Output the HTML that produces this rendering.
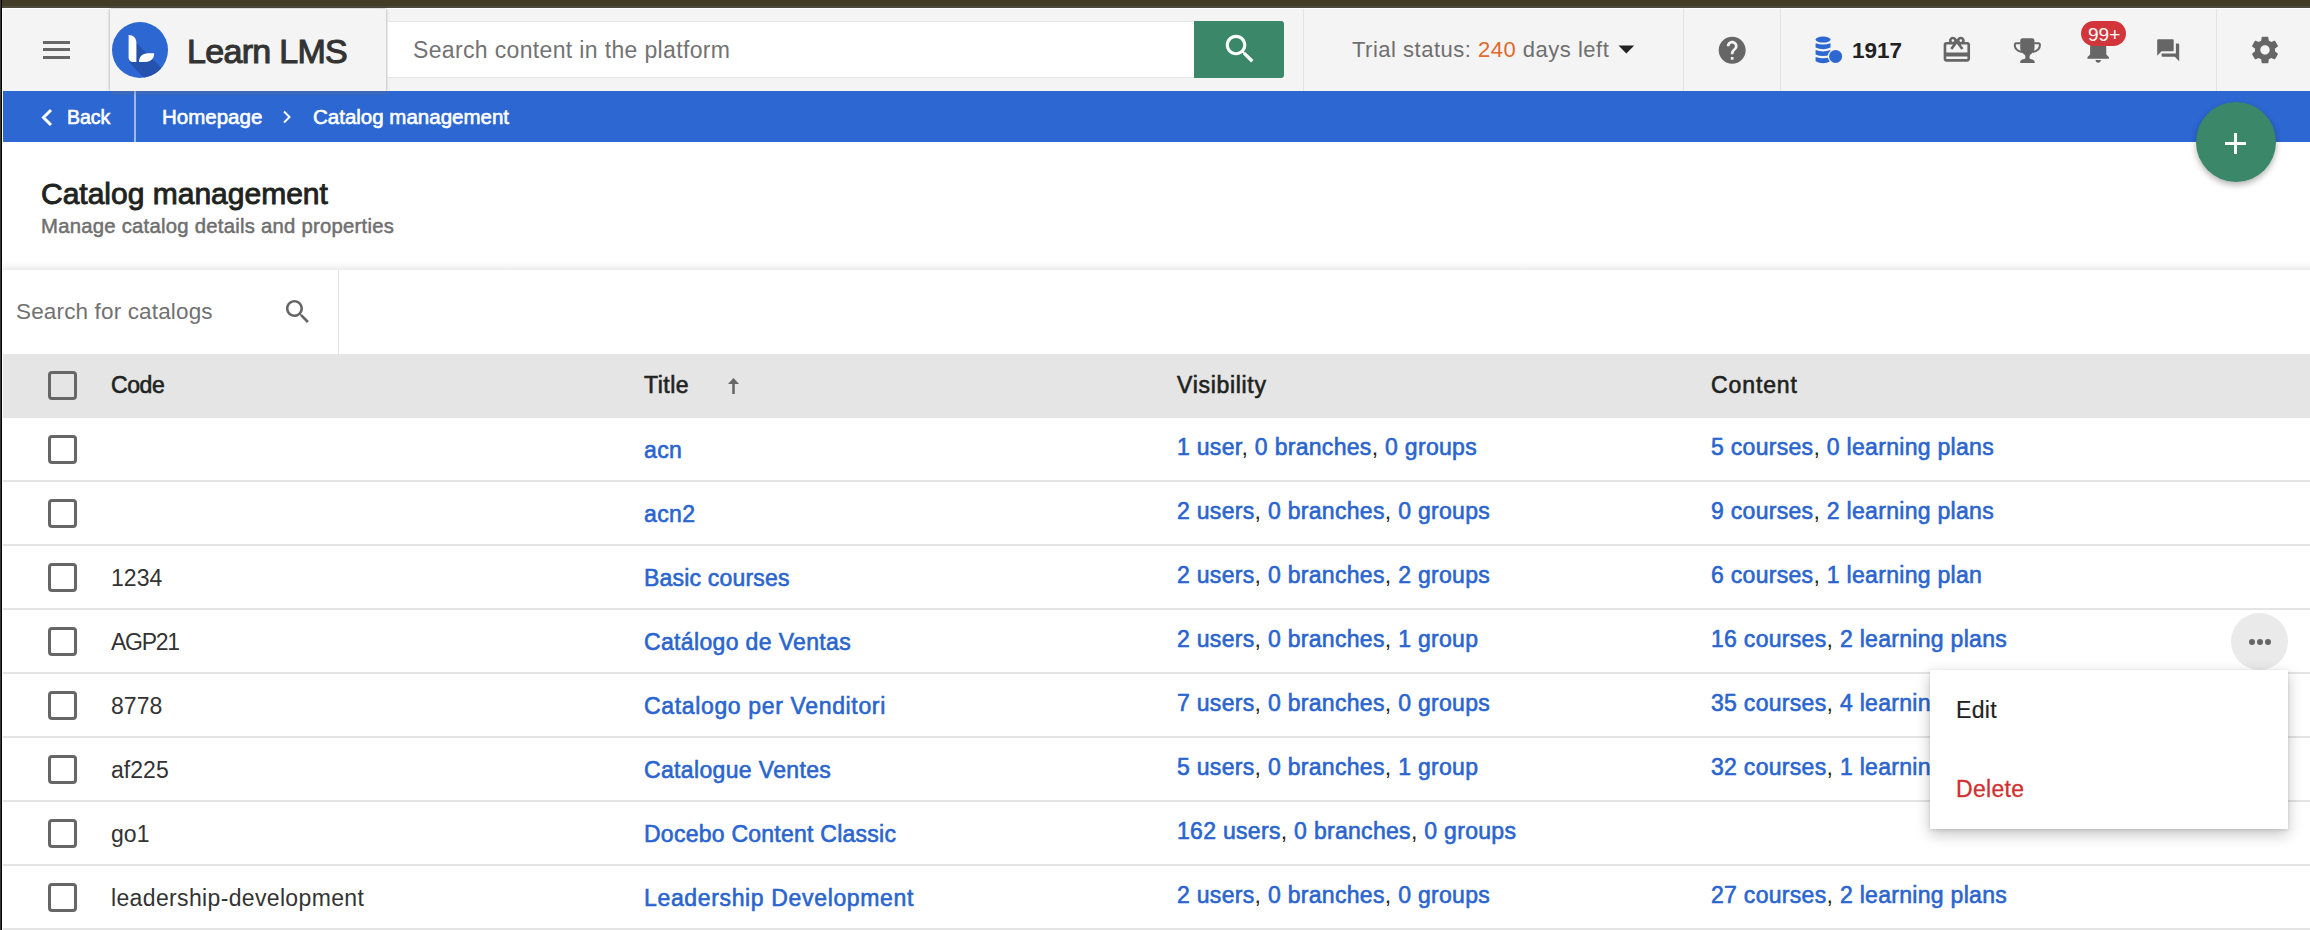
<!DOCTYPE html>
<html><head><meta charset="utf-8">
<style>
*{box-sizing:border-box;margin:0;padding:0}
html,body{width:2310px;height:930px;overflow:hidden;background:#fff;font-family:"Liberation Sans",sans-serif;position:relative}
.a{position:absolute}
.t{position:absolute;white-space:nowrap;line-height:1}
.sb{-webkit-text-stroke:0.6px currentColor}
svg{position:absolute;display:block}
.vd{position:absolute;top:9px;width:1px;height:82px;background:#e2e2e2}
.cb{position:absolute;left:48px;width:29px;height:29px;border:3px solid #666;border-radius:4px;background:#fff}
.rl{position:absolute;left:3px;width:2307px;height:2px;background:#e4e4e4}
.lk{color:#2a65cf}
.cm{color:#222}
</style></head><body>
<!-- top dark bar -->
<div class="a" style="left:0;top:0;width:2310px;height:8px;background:#433c27"></div>
<div class="a" style="left:0;top:6px;width:2310px;height:2px;background:#4e4a3c"></div>
<div class="a" style="left:0;top:8px;width:2310px;height:1px;background:#fff"></div>
<!-- header -->
<div class="a" style="left:3px;top:9px;width:2307px;height:82px;background:#f4f4f4"></div>

<!-- hamburger -->
<div class="a" style="left:43px;top:41px;width:27px;height:3px;background:#666"></div>
<div class="a" style="left:43px;top:48px;width:27px;height:3px;background:#666"></div>
<div class="a" style="left:43px;top:56px;width:27px;height:3px;background:#666"></div>

<!-- logo panel -->
<div class="a" style="left:110px;top:9px;width:276px;height:82px;background:#f4f4f4;box-shadow:0 0 3px rgba(0,0,0,0.35)"></div>
<svg style="left:112px;top:22px" width="56" height="56" viewBox="0 0 56 56">
  <defs><clipPath id="cc"><circle cx="28" cy="28" r="28"/></clipPath></defs>
  <circle cx="28" cy="28" r="28" fill="#2d67d2"/>
  <g clip-path="url(#cc)">
    <polygon points="24.4,21 62,58.6 62,62 38,62 17,40" fill="#2452ad"/>
  </g>
  <path d="M16.6,13 C21.5,13 24.4,16.5 24.4,21 L24.4,40 L21,40 C18.5,40 16.6,38 16.6,35.5 Z" fill="#fff"/>
  <path d="M27,40 C27,35 30,31.3 36,31.3 L42.2,31.3 C42.2,36.5 39,40 33,40 Z" fill="#fff"/>
</svg>
<div class="t" style="left:187px;top:34px;font-size:34px;color:#333;letter-spacing:-0.7px;-webkit-text-stroke:1.1px #333">Learn LMS</div>

<!-- search -->
<div class="a" style="left:387px;top:21px;width:807px;height:57px;background:#fff;border:1px solid #e6e6e6;border-right:none"></div>
<div class="t" style="left:413px;top:39px;font-size:23px;letter-spacing:0.35px;color:#737373">Search content in the platform</div>
<div class="a" style="left:1194px;top:21px;width:90px;height:57px;background:#3b8769;border-radius:0 3px 3px 0"></div>
<svg style="left:1221px;top:30px" width="38" height="38" viewBox="0 0 24 24"><path fill="#fff" d="M15.5 14h-.79l-.28-.27C15.41 12.59 16 11.11 16 9.5 16 5.91 13.09 3 9.5 3S3 5.91 3 9.5 5.91 16 9.5 16c1.61 0 3.09-.59 4.23-1.57l.27.28v.79l5 4.99L20.49 19l-4.99-5zm-6 0C7.01 14 5 11.99 5 9.5S7.01 5 9.5 5 14 7.01 14 9.5 11.99 14 9.5 14z"/></svg>

<div class="vd" style="left:1303px"></div>
<div class="t" style="left:1352px;top:39px;font-size:22px;letter-spacing:0.5px;color:#6f6f6f">Trial status: <span style="color:#e0692b">240</span> days left</div>
<svg style="left:1618px;top:45px" width="17" height="9" viewBox="0 0 17 9"><polygon points="0.5,0.5 16.2,0.5 8.35,8.6" fill="#222"/></svg>
<div class="vd" style="left:1683px"></div>
<svg style="left:1716px;top:34px" width="32.4" height="32.4" viewBox="0 0 24 24"><path fill="#666" d="M12 2C6.48 2 2 6.48 2 12s4.48 10 10 10 10-4.48 10-10S17.52 2 12 2zm1 17h-2v-2h2v2zm2.07-7.75l-.9.92C13.45 12.9 13 13.5 13 15h-2v-.5c0-1.1.45-2.1 1.17-2.83l1.24-1.26c.37-.36.59-.86.59-1.41 0-1.1-.9-2-2-2s-2 .9-2 2H8c0-2.21 1.79-4 4-4s4 1.79 4 4c0 .88-.36 1.68-.93 2.25z"/></svg>
<div class="vd" style="left:1780px"></div>

<!-- coins -->
<svg style="left:1810px;top:32px" width="40" height="36" viewBox="0 0 40 36">
  <g fill="#2d67d2">
    <ellipse cx="13.05" cy="7.55" rx="7.45" ry="2.95"/>
    <path d="M5.6,11.2 Q13.05,13.8 20.5,11.2 V15.5 Q13.05,18.9 5.6,15.5 Z"/>
    <path d="M5.6,18.1 Q13.05,20.7 20.5,18.1 V22.4 Q13.05,25.8 5.6,22.4 Z"/>
    <path d="M5.6,25.0 Q13.05,27.6 20.5,25.0 V29.3 Q13.05,33.3 5.6,29.3 Z"/>
  </g>
  <circle cx="25.6" cy="24.4" r="7.8" fill="#f4f4f4"/>
  <circle cx="25.6" cy="24.4" r="6.5" fill="#2d67d2"/>
</svg>
<div class="t" style="left:1852px;top:39.5px;font-size:22.5px;font-weight:bold;color:#222">1917</div>

<!-- gift -->
<svg style="left:1941px;top:34px" width="31.7" height="31.7" viewBox="0 0 24 24"><path fill="#666" d="M20 6h-2.18c.11-.31.18-.65.18-1 0-1.66-1.34-3-3-3-1.05 0-1.96.54-2.5 1.35l-.5.67-.5-.68C10.96 2.54 10.05 2 9 2 7.34 2 6 3.340 6 5c0 .35.07.69.18 1H4c-1.11 0-1.99.89-1.99 2L2 19c0 1.11.89 2 2 2h16c1.11 0 2-.89 2-2V8c0-1.11-.89-2-2-2zm-5-2c.55 0 1 .45 1 1s-.45 1-1 1-1-.45-1-1 .45-1 1-1zM9 4c.55 0 1 .45 1 1s-.45 1-1 1-1-.45-1-1 .45-1 1-1zm11 15H4v-2h16v2zm0-5H4V8h5.08L7 10.83 8.62 12 11 8.76l1-1.36 1 1.36L15.38 12 17 10.83 14.92 8H20v6z"/></svg>
<!-- trophy -->
<svg style="left:2008px;top:32px" width="40" height="36" viewBox="0 0 40 36">
  <path fill="#666" d="M12.2,8.7 Q12.2,6.2 14.7,6.2 H24 Q26.5,6.2 26.5,8.7 V15.5 C26.5,19.5 24.5,21 22.5,22.5 C21.3,23.5 21.1,25.8 22.2,27.1 C25,27.3 26.7,28.3 26.7,30 V31 H12.2 V30 C12.2,28.3 13.9,27.3 16.7,27.1 C17.8,25.8 17.6,23.5 16.4,22.5 C14.4,21 12.2,19.5 12.2,15.5 Z"/>
  <path fill="none" stroke="#666" stroke-width="2" d="M12.5,11.3 H8.3 Q6.8,11.3 6.8,13.3 C6.8,17 9.5,19.2 14.2,19.9 M26.2,11.3 H30.4 Q31.9,11.3 31.9,13.3 C31.9,17 29.2,19.2 24.5,19.9"/>
</svg>
<!-- bell -->
<svg style="left:2082px;top:33px" width="32.4" height="32.4" viewBox="0 0 24 24"><path fill="#666" d="M12 22c1.1 0 2-.9 2-2h-4c0 1.1.9 2 2 2zm6-6v-5c0-3.07-1.63-5.64-4.5-6.32V2.5h-3v2.18C7.64 5.36 6 7.92 6 11v5l-2 2v1h16v-1l-2-2z"/></svg>
<div class="a" style="left:2081px;top:21px;width:45px;height:25px;border-radius:12.5px;background:#d2363a"></div>
<div class="t" style="left:2088px;top:25px;font-size:19px;color:#fff">99+</div>
<!-- chat -->
<svg style="left:2155px;top:37px" width="26.4" height="26.4" viewBox="0 0 24 24"><path fill="#666" d="M21 6h-2v9H6v2c0 .55.45 1 1 1h11l4 4V7c0-.55-.45-1-1-1zm-4 6V3c0-.55-.45-1-1-1H3c-.55 0-1 .45-1 1v14l4-4h10c.55 0 1-.45 1-1z"/></svg>
<div class="vd" style="left:2216px"></div>
<!-- gear -->
<svg style="left:2249px;top:34px" width="32" height="32" viewBox="0 0 24 24"><path fill="#666" d="M19.43 12.98c.04-.32.07-.64.07-.98s-.03-.66-.07-.98l2.110-1.65c.19-.15.24-.42.12-.64l-2-3.46c-.12-.22-.39-.3-.61-.22l-2.49 1c-.52-.4-1.08-.73-1.69-.98l-.38-2.65C14.46 2.18 14.25 2 14 2h-4c-.25 0-.46.18-.49.42l-.38 2.65c-.61.25-1.17.59-1.69.98l-2.49-1c-.23-.09-.49 0-.61.22l-2 3.46c-.13.22-.07.49.12.64l2.11 1.65c-.04.32-.07.65-.07.98s.03.66.07.98l-2.11 1.65c-.19.15-.24.42-.12.64l2 3.46c.12.22.39.3.61.22l2.49-1c.52.4 1.08.73 1.69.98l.38 2.65c.03.24.24.42.49.42h4c.25 0 .46-.18.49-.42l.38-2.65c.61-.25 1.17-.59 1.69-.98l2.49 1c.23.09.49 0 .61-.22l2-3.46c.12-.22.07-.49-.12-.64l-2.11-1.65zM12 15.5c-1.93 0-3.5-1.57-3.5-3.5s1.57-3.5 3.5-3.5 3.5 1.57 3.5 3.5-1.57 3.5-3.5 3.5z"/></svg>

<!-- blue bar -->
<div class="a" style="left:3px;top:91px;width:2307px;height:51px;background:#2d67d2"></div>
<svg style="left:40px;top:108px" width="14" height="19" viewBox="0 0 14 19"><polyline points="11,2 3.5,9.5 11,17" fill="none" stroke="#fff" stroke-width="3"/></svg>
<div class="t sb" style="left:67px;top:107.5px;font-size:19.5px;color:#fff">Back</div>
<div class="a" style="left:134px;top:91px;width:2px;height:51px;background:#9fb9ea"></div>
<div class="a" style="left:112px;top:91px;width:276px;height:5px;background:linear-gradient(to bottom,rgba(110,110,110,0.35),rgba(110,110,110,0))"></div>
<div class="t sb" style="left:162px;top:107px;font-size:20.5px;color:#fff">Homepage</div>
<svg style="left:281px;top:110px" width="12" height="14" viewBox="0 0 12 14"><polyline points="3,1.5 8.5,7 3,12.5" fill="none" stroke="#fff" stroke-width="2"/></svg>
<div class="t sb" style="left:313px;top:107px;font-size:20.5px;color:#fff">Catalog management</div>

<!-- title -->
<div class="t" style="left:41px;top:179px;font-size:30px;color:#1e2320;-webkit-text-stroke:0.9px #1e2320">Catalog management</div>
<div class="t" style="left:41px;top:216px;font-size:20.3px;letter-spacing:0.25px;color:#6f6f6f;-webkit-text-stroke:0.5px #6f6f6f">Manage catalog details and properties</div>

<!-- fab -->
<div class="a" style="left:2196px;top:102px;width:80px;height:80px;border-radius:50%;background:#3b8769;box-shadow:0 3px 6px rgba(0,0,0,0.3)"></div>
<div class="a" style="left:2225px;top:142px;width:21px;height:3px;background:#fff"></div>
<div class="a" style="left:2234px;top:133px;width:3px;height:21px;background:#fff"></div>

<!-- separator -->
<div class="a" style="left:3px;top:261px;width:2307px;height:9px;background:linear-gradient(to bottom,rgba(0,0,0,0),rgba(0,0,0,0.035) 60%,rgba(0,0,0,0.075))"></div>

<!-- filter -->
<div class="t" style="left:16px;top:301px;font-size:22.5px;letter-spacing:0.15px;color:#717171">Search for catalogs</div>
<svg style="left:282px;top:296px" width="31.5" height="31.5" viewBox="0 0 24 24"><path fill="#666" d="M15.5 14h-.79l-.28-.27C15.41 12.59 16 11.11 16 9.5 16 5.91 13.09 3 9.5 3S3 5.91 3 9.5 5.91 16 9.5 16c1.61 0 3.09-.59 4.23-1.57l.27.28v.79l5 4.99L20.49 19l-4.99-5zm-6 0C7.01 14 5 11.990 5 9.5S7.01 5 9.5 5 14 7.01 14 9.5 11.99 14 9.5 14z"/></svg>
<div class="a" style="left:338px;top:270px;width:1px;height:84px;background:#e4e4e4"></div>

<!-- table header -->
<div class="a" style="left:3px;top:354px;width:2307px;height:64px;background:#e5e5e5"></div>
<div class="cb" style="top:371px;background:#e5e5e5"></div>
<div class="t sb" style="left:111px;top:374px;font-size:23px;letter-spacing:-0.4px;color:#1e2320">Code</div>
<div class="t sb" style="left:644px;top:374px;font-size:23px;letter-spacing:0.5px;color:#1e2320">Title</div>
<svg style="left:727px;top:377px" width="13" height="18" viewBox="0 0 13 18"><polygon points="6.5,1 12,7 1,7" fill="#666"/><rect x="5.25" y="6" width="2.5" height="11" fill="#666"/></svg>
<div class="t sb" style="left:1177px;top:374px;font-size:23px;letter-spacing:0.7px;color:#1e2320">Visibility</div>
<div class="t sb" style="left:1711px;top:374px;font-size:23px;letter-spacing:0.9px;color:#1e2320">Content</div>

<!-- ROWS -->
<div class="cb" style="top:435px"></div>
<div class="t lk sb" style="left:644px;top:439px;font-size:23px;letter-spacing:0.35px">acn</div>
<div class="t" style="left:1177px;top:435.5px;font-size:23px;letter-spacing:0.3px"><span class="lk sb">1 user</span><span class="cm">, </span><span class="lk sb">0 branches</span><span class="cm">, </span><span class="lk sb">0 groups</span></div>
<div class="t" style="left:1711px;top:435.5px;font-size:23px;letter-spacing:0.3px"><span class="lk sb">5 courses</span><span class="cm">, </span><span class="lk sb">0 learning plans</span></div>
<div class="rl" style="top:480px"></div>
<div class="cb" style="top:499px"></div>
<div class="t lk sb" style="left:644px;top:503px;font-size:23px;letter-spacing:0.35px">acn2</div>
<div class="t" style="left:1177px;top:499.5px;font-size:23px;letter-spacing:0.3px"><span class="lk sb">2 users</span><span class="cm">, </span><span class="lk sb">0 branches</span><span class="cm">, </span><span class="lk sb">0 groups</span></div>
<div class="t" style="left:1711px;top:499.5px;font-size:23px;letter-spacing:0.3px"><span class="lk sb">9 courses</span><span class="cm">, </span><span class="lk sb">2 learning plans</span></div>
<div class="rl" style="top:544px"></div>
<div class="cb" style="top:563px"></div>
<div class="t cm" style="left:111px;top:567px;font-size:23px;letter-spacing:0.05px;color:#333">1234</div>
<div class="t lk sb" style="left:644px;top:567px;font-size:23px;letter-spacing:0.2px">Basic courses</div>
<div class="t" style="left:1177px;top:563.5px;font-size:23px;letter-spacing:0.3px"><span class="lk sb">2 users</span><span class="cm">, </span><span class="lk sb">0 branches</span><span class="cm">, </span><span class="lk sb">2 groups</span></div>
<div class="t" style="left:1711px;top:563.5px;font-size:23px;letter-spacing:0.3px"><span class="lk sb">6 courses</span><span class="cm">, </span><span class="lk sb">1 learning plan</span></div>
<div class="rl" style="top:608px"></div>
<div class="cb" style="top:627px"></div>
<div class="t cm" style="left:111px;top:631px;font-size:23px;letter-spacing:-1.3px;color:#333">AGP21</div>
<div class="t lk sb" style="left:644px;top:631px;font-size:23px;letter-spacing:0.35px">Cat&aacute;logo de Ventas</div>
<div class="t" style="left:1177px;top:627.5px;font-size:23px;letter-spacing:0.3px"><span class="lk sb">2 users</span><span class="cm">, </span><span class="lk sb">0 branches</span><span class="cm">, </span><span class="lk sb">1 group</span></div>
<div class="t" style="left:1711px;top:627.5px;font-size:23px;letter-spacing:0.3px"><span class="lk sb">16 courses</span><span class="cm">, </span><span class="lk sb">2 learning plans</span></div>
<div class="rl" style="top:672px"></div>
<div class="cb" style="top:691px"></div>
<div class="t cm" style="left:111px;top:695px;font-size:23px;letter-spacing:0.05px;color:#333">8778</div>
<div class="t lk sb" style="left:644px;top:695px;font-size:23px;letter-spacing:0.65px">Catalogo per Venditori</div>
<div class="t" style="left:1177px;top:691.5px;font-size:23px;letter-spacing:0.3px"><span class="lk sb">7 users</span><span class="cm">, </span><span class="lk sb">0 branches</span><span class="cm">, </span><span class="lk sb">0 groups</span></div>
<div class="t" style="left:1711px;top:691.5px;font-size:23px;letter-spacing:0.3px"><span class="lk sb">35 courses</span><span class="cm">, </span><span class="lk sb">4 learning plans</span></div>
<div class="rl" style="top:736px"></div>
<div class="cb" style="top:755px"></div>
<div class="t cm" style="left:111px;top:759px;font-size:23px;letter-spacing:0.05px;color:#333">af225</div>
<div class="t lk sb" style="left:644px;top:759px;font-size:23px;letter-spacing:0.35px">Catalogue Ventes</div>
<div class="t" style="left:1177px;top:755.5px;font-size:23px;letter-spacing:0.3px"><span class="lk sb">5 users</span><span class="cm">, </span><span class="lk sb">0 branches</span><span class="cm">, </span><span class="lk sb">1 group</span></div>
<div class="t" style="left:1711px;top:755.5px;font-size:23px;letter-spacing:0.3px"><span class="lk sb">32 courses</span><span class="cm">, </span><span class="lk sb">1 learning plan</span></div>
<div class="rl" style="top:800px"></div>
<div class="cb" style="top:819px"></div>
<div class="t cm" style="left:111px;top:823px;font-size:23px;letter-spacing:0.05px;color:#333">go1</div>
<div class="t lk sb" style="left:644px;top:823px;font-size:23px;letter-spacing:0.25px">Docebo Content Classic</div>
<div class="t" style="left:1177px;top:819.5px;font-size:23px;letter-spacing:0.3px"><span class="lk sb">162 users</span><span class="cm">, </span><span class="lk sb">0 branches</span><span class="cm">, </span><span class="lk sb">0 groups</span></div>
<div class="rl" style="top:864px"></div>
<div class="cb" style="top:883px"></div>
<div class="t cm" style="left:111px;top:887px;font-size:23px;letter-spacing:0.35px;color:#333">leadership-development</div>
<div class="t lk sb" style="left:644px;top:887px;font-size:23px;letter-spacing:0.65px">Leadership Development</div>
<div class="t" style="left:1177px;top:883.5px;font-size:23px;letter-spacing:0.3px"><span class="lk sb">2 users</span><span class="cm">, </span><span class="lk sb">0 branches</span><span class="cm">, </span><span class="lk sb">0 groups</span></div>
<div class="t" style="left:1711px;top:883.5px;font-size:23px;letter-spacing:0.3px"><span class="lk sb">27 courses</span><span class="cm">, </span><span class="lk sb">2 learning plans</span></div>
<div class="rl" style="top:928px"></div>
<!-- /ROWS -->
<!-- dots button -->
<div class="a" style="left:2231px;top:613px;width:57px;height:57px;border-radius:50%;background:#eaeaea"></div>
<div class="a" style="left:2249px;top:639px;width:6px;height:6px;border-radius:50%;background:#666"></div>
<div class="a" style="left:2257px;top:639px;width:6px;height:6px;border-radius:50%;background:#666"></div>
<div class="a" style="left:2265px;top:639px;width:6px;height:6px;border-radius:50%;background:#666"></div>
<!-- menu -->
<div class="a" style="left:1930px;top:670px;width:358px;height:159px;background:#fff;box-shadow:0 5px 14px rgba(0,0,0,0.24),0 1px 3px rgba(0,0,0,0.12)"></div>
<div class="t" style="left:1956px;top:698.5px;font-size:23px;letter-spacing:0.3px;color:#1e2320;-webkit-text-stroke:0.2px #1e2320">Edit</div>
<div class="t" style="left:1956px;top:777.5px;font-size:23px;letter-spacing:0.3px;color:#d0302f;-webkit-text-stroke:0.3px #d0302f">Delete</div>
<!-- left edge -->
<div class="a" style="left:0;top:0;width:1px;height:930px;background:#3c3a30"></div>
<div class="a" style="left:1px;top:0;width:1px;height:930px;background:#000"></div>
<div class="a" style="left:2px;top:8px;width:1px;height:922px;background:#fff"></div>
</body></html>
